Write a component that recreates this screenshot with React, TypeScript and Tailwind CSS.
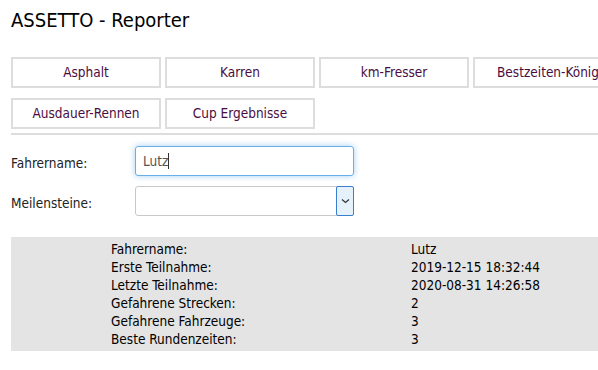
import React from "react";

const font = { fontFamily: '"DejaVu Sans Condensed", "DejaVu Sans", sans-serif' };

const rows: [string, string][] = [
  ["Fahrername:", "Lutz"],
  ["Erste Teilnahme:", "2019-12-15 18:32:44"],
  ["Letzte Teilnahme:", "2020-08-31 14:26:58"],
  ["Gefahrene Strecken:", "2"],
  ["Gefahrene Fahrzeuge:", "3"],
  ["Beste Rundenzeiten:", "3"],
];

function Btn({ label }: { label: string }) {
  return (
    <div className="w-[150px] h-[31px] shrink-0 border-2 border-[#dddddd] bg-white flex items-center justify-center text-[13.5px] text-[#4a0d42] whitespace-nowrap">
      {label}
    </div>
  );
}

export default function App() {
  return (
    <div className="w-[598px] h-[370px] overflow-hidden bg-white text-[#222]" style={font}>
      <div className="pl-[11px]">
        <div className="pt-[8px] h-[57px] text-[20px] leading-[24px] text-black">ASSETTO - Reporter</div>
        <div className="flex gap-[4px] w-[700px]">
          <Btn label="Asphalt" />
          <Btn label="Karren" />
          <Btn label="km-Fresser" />
          <Btn label="Bestzeiten-König" />
        </div>
        <div className="flex gap-[4px] mt-[10px]">
          <Btn label="Ausdauer-Rennen" />
          <Btn label="Cup Ergebnisse" />
        </div>
        <div className="mt-[4px] h-[2px] bg-[#dddddd]" />
        <div className="mt-[11px] flex items-center h-[30px]">
          <div className="w-[124px] pt-[5px] text-[13.5px] text-[#222]">Fahrername:</div>
          <div className="w-[219px] h-[30px] rounded-[3px] border border-[#66afe9] shadow-[0_0_6px_rgba(102,175,233,0.6)] flex items-center pl-[7px] text-[13.5px] text-[#555]">
            Lutz<span className="inline-block w-px h-[16px] bg-[#333]" />
          </div>
        </div>
        <div className="mt-[10px] flex items-center h-[30px]">
          <div className="w-[124px] pt-[5px] text-[13.5px] text-[#222]">Meilensteine:</div>
          <div className="w-[219px] h-[30px] rounded-[3px] border border-[#c8c8c8] flex justify-end items-stretch">
            <div className="w-[18px] -my-px -mr-px border border-[#3a7fcf] rounded-[2px] bg-[#e5f1fb] flex items-center justify-center">
              <svg width="9" height="6" viewBox="0 0 9 6"><path d="M1 1.5 L4.5 4.5 L8 1.5" fill="none" stroke="#333" strokeWidth="1.2" /></svg>
            </div>
          </div>
        </div>
        <div className="mt-[21px] h-[114px] bg-[#e4e4e4] pt-[3px] pl-[100px]">
          {rows.map(([k, v]) => (
            <div key={k} className="flex h-[18px] items-center text-[13.5px] text-black">
              <div className="w-[300px]">{k}</div>
              <div>{v}</div>
            </div>
          ))}
        </div>
      </div>
    </div>
  );
}
